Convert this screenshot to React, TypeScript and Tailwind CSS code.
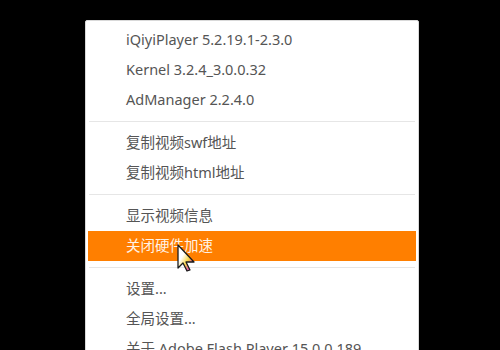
const items: (string | null)[] = [
  'iQiyiPlayer 5.2.19.1-2.3.0',
  'Kernel 3.2.4_3.0.0.32',
  'AdManager 2.2.4.0',
  null,
  '复制视频swf地址',
  '复制视频html地址',
  null,
  '显示视频信息',
  '关闭硬件加速',
  null,
  '设置...',
  '全局设置...',
  '关于 Adobe Flash Player 15.0.0.189...',
];

const Cursor = () => (
  <svg
    className="absolute left-[176px] top-[244px]"
    width="22"
    height="28"
    viewBox="0 0 22 28"
  >
    <defs>
      <linearGradient id="cg" x1="0" y1="0" x2="1" y2="1">
        <stop offset="0.35" stopColor="#ffffff" />
        <stop offset="0.6" stopColor="#f9d64a" />
        <stop offset="0.8" stopColor="#e04fa8" />
        <stop offset="1" stopColor="#3cc8e8" />
      </linearGradient>
    </defs>
    <path
      d="M2 1 L2 24 L7 19 L11 27 L14 26 L10 18 L18 18 Z"
      fill="url(#cg)"
      stroke="#1a1a1a"
      strokeWidth="1.3"
      strokeLinejoin="round"
    />
  </svg>
);

export default function App() {
  return (
    <div
      className="relative w-[500px] h-[350px] bg-black overflow-hidden"
      style={{ fontFamily: '"Noto Sans", "Noto Sans CJK SC", sans-serif' }}
    >
      <div className="absolute left-[85px] top-[20px] w-[334px] bg-white rounded-[2px] border border-[#d9d9d9] pt-[4px] pb-2">
        {items.map((it, i) =>
          it === null ? (
            <div key={i} className="my-[6px] mx-[3px] h-px bg-[#e6e6e6]" />
          ) : it === '关闭硬件加速' ? (
            <div
              key={i}
              className="mx-[2px] h-[30px] flex items-center pl-[38px] bg-[#ff7f00] text-[#fff3e6] text-[14.5px]"
            >
              {it}
            </div>
          ) : (
            <div
              key={i}
              className="h-[30px] flex items-center pl-[40px] text-[#555555] text-[14.5px] whitespace-nowrap"
            >
              {it}
            </div>
          )
        )}
      </div>
      <Cursor />
    </div>
  );
}
